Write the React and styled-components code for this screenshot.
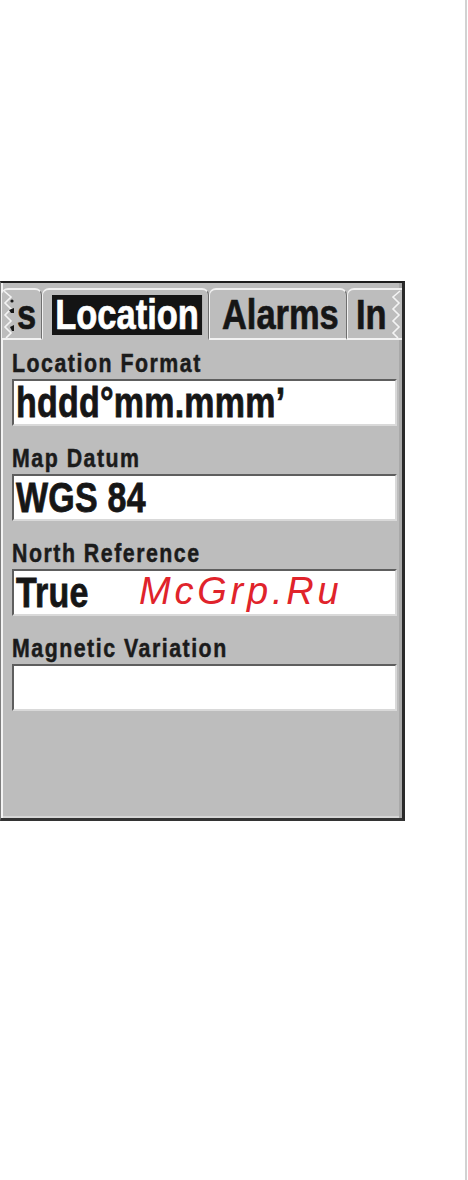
import React from "react";
import styled, { createGlobalStyle } from "styled-components";

const GlobalStyle = createGlobalStyle`
  html, body {
    margin: 0;
    padding: 0;
    background: #fff;
  }
  body {
    font-family: "Liberation Sans", Arial, sans-serif;
  }
`;

// no narrow face installed, so the bold sans is squeezed to the unit's bitmap font width
const GPS_FONT = `"Liberation Sans", Arial, sans-serif`;

const Page = styled.div`
  position: relative;
  display: flex;
  width: 468px;
  height: 1180px;
  background: #fff;
`;

const Main = styled.div`
  flex: 1;
  padding-top: 281px;
`;

const Rule = styled.div`
  width: 2px;
  margin-right: 1px;
  background: #d2d2d2;
`;

const Screen = styled.div`
  box-sizing: border-box;
  display: flex;
  flex-direction: column;
  width: 405px;
  height: 540px;
  background: #bdbdbd;
  border-top: 2px solid #1e1e1e;
  border-right: 3px solid #2a2a2a;
  border-bottom: 3px solid #333;
  border-left: 1px solid #7d7d7d;
  box-shadow: inset 2px 0 0 #f4f4f4, inset -3px 0 0 #a9a9a9,
    inset 0 -2px 0 #d6d6d6;
`;

const TabStrip = styled.div`
  box-sizing: border-box;
  display: flex;
  height: 57px;
  padding-top: 5px;
`;

const Tab = styled.div`
  position: relative;
  box-sizing: border-box;
  display: flex;
  align-items: flex-start;
  flex-shrink: 0;
  width: ${(p) => p.$w}px;
  height: 52px;
  padding: 5px 0 0 ${(p) => p.$pad}px;
  background: #bdbdbd;
  border-top: 2px solid #f2f2f2;
  border-left: 1px solid #f2f2f2;
  border-right: ${(p) => (p.$last ? "none" : "1px solid #6f6f6f")};
  border-bottom: 2px solid ${(p) => (p.$active ? "#bdbdbd" : "#f2f2f2")};
  border-radius: ${(p) => (p.$last ? "7px 0 0 0" : "7px 7px 0 0")};
  overflow: hidden;
`;

const TabLabel = styled.span`
  display: block;
  flex-shrink: 0;
  height: 40px;
  padding: 0 ${(p) => (p.$active ? "4px" : "0")};
  font: bold 42px/40px ${GPS_FONT};
  color: ${(p) => (p.$active ? "#fff" : "#161616")};
  -webkit-text-stroke: 0.7px ${(p) => (p.$active ? "#fff" : "#161616")};
  background: ${(p) => (p.$active ? "#141414" : "transparent")};
  white-space: nowrap;
  transform: scaleX(0.82);
  transform-origin: 0 50%;
`;

const Edge = styled.svg`
  position: absolute;
  top: 0;
  ${(p) => (p.$side === "left" ? "left: 0;" : "right: 0;")}
  width: 12px;
  height: 48px;
`;

const Body = styled.div`
  display: flex;
  flex-direction: column;
  gap: 19px;
  padding: 10px 5px 0 11px;
`;

const Field = styled.div`
  display: flex;
  flex-direction: column;
  gap: 3px;
`;

const Label = styled.div`
  height: 26px;
  font: bold 26px/26px ${GPS_FONT};
  letter-spacing: 1.85px;
  color: #1b1b1b;
  -webkit-text-stroke: 0.5px #1b1b1b;
  white-space: nowrap;
  transform: scaleX(0.82);
  transform-origin: 0 50%;
`;

const ValueBox = styled.div`
  box-sizing: border-box;
  height: 47px;
  padding-left: 2px;
  background: #fff;
  border-top: 2px solid #5e5e5e;
  border-left: 2px solid #5e5e5e;
  border-right: 2px solid #d9d9d9;
  border-bottom: 2px solid #d9d9d9;
  overflow: hidden;
`;

const ValueText = styled.span`
  display: inline-block;
  font: bold 43px/43px ${GPS_FONT};
  color: #161616;
  -webkit-text-stroke: 0.8px #161616;
  letter-spacing: 0.3px;
  white-space: nowrap;
  transform: scaleX(0.79);
  transform-origin: 0 50%;
`;

const Watermark = styled.div`
  position: absolute;
  left: 139px;
  top: 572px;
  font: italic 38px/38px "Liberation Sans", Arial, sans-serif;
  letter-spacing: 3.8px;
  color: #e0232b;
  white-space: nowrap;
`;

const zigzag = "2,1 9,7 3,13 9,19 3,25 9,31 3,37 9,43 4,48";

function LeftEdge() {
  return (
    <Edge $side="left" viewBox="0 0 12 48">
      <polygon points={`0,0 ${zigzag} 0,48`} fill="#bdbdbd" />
      <polyline points={zigzag} fill="none" stroke="#f4f4f4" strokeWidth="1.6" />
      <circle cx="10" cy="11" r="1.6" fill="#161616" />
      <polygon points="7,20 12,18 12,23 9,23" fill="#161616" />
      <polygon points="8,37 12,35 12,41 10,41" fill="#161616" />
    </Edge>
  );
}

function RightEdge() {
  const pts = "10,1 3,7 9,13 3,19 9,25 3,31 9,37 3,43 8,48";
  return (
    <Edge $side="right" viewBox="0 0 12 48">
      <polygon points={`12,0 ${pts} 12,48`} fill="#bdbdbd" />
      <polyline points={pts} fill="none" stroke="#f4f4f4" strokeWidth="1.6" />
    </Edge>
  );
}

const tabs = [
  { label: "s", w: 41, pad: 15, edge: "left" },
  { label: "Location", w: 167, pad: 9, active: true },
  { label: "Alarms", w: 138, pad: 12 },
  { label: "In", w: 55, pad: 8, edge: "right", last: true },
];

const fields = [
  { label: "Location Format", value: "hddd°mm.mmm’" },
  { label: "Map Datum", value: "WGS 84" },
  { label: "North Reference", value: "True" },
  { label: "Magnetic Variation", value: "" },
];

export default function App() {
  return (
    <Page>
      <GlobalStyle />
      <Main>
        <Screen>
          <TabStrip>
            {tabs.map((t) => (
              <Tab key={t.label} $w={t.w} $pad={t.pad} $active={t.active} $last={t.last}>
                <TabLabel $active={t.active}>{t.label}</TabLabel>
                {t.edge === "left" && <LeftEdge />}
                {t.edge === "right" && <RightEdge />}
              </Tab>
            ))}
          </TabStrip>
          <Body>
            {fields.map((f) => (
              <Field key={f.label}>
                <Label>{f.label}</Label>
                <ValueBox>
                  <ValueText>{f.value}</ValueText>
                </ValueBox>
              </Field>
            ))}
          </Body>
        </Screen>
      </Main>
      <Rule />
      <Watermark>McGrp.Ru</Watermark>
    </Page>
  );
}
